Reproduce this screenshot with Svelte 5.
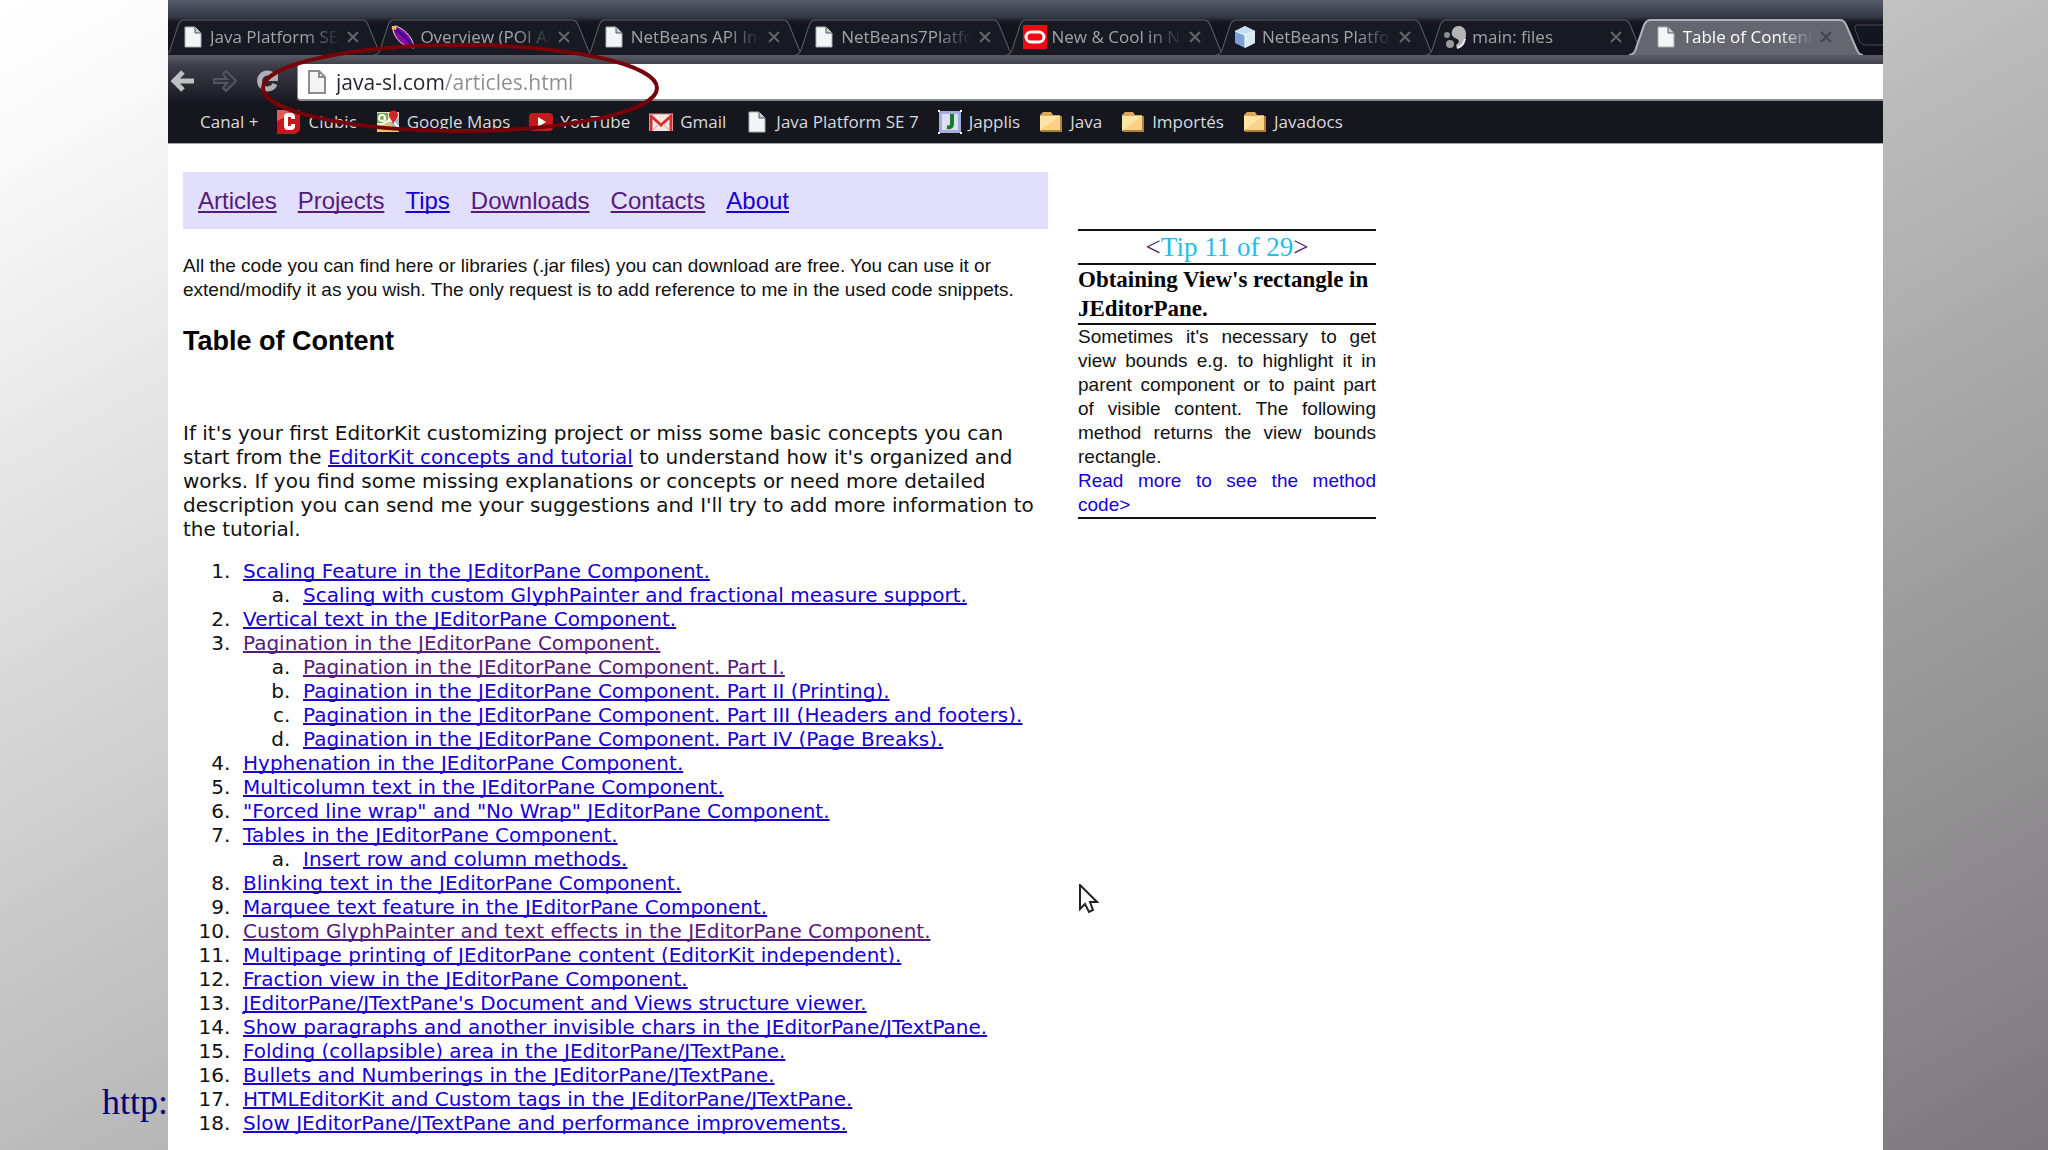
<script lang="ts">
	interface Tab {
		title: string;
		icon: string;
	}

	interface Entry {
		title: string;
		visited?: boolean;
		children?: Entry[];
	}

	const tabs: Tab[] = [
		{ title: 'Java Platform SE 7', icon: 'page' },
		{ title: 'Overview (POI API)', icon: 'feather' },
		{ title: 'NetBeans API Index', icon: 'page' },
		{ title: 'NetBeans7Platform', icon: 'page' },
		{ title: 'New & Cool in Net', icon: 'oracle' },
		{ title: 'NetBeans Platform', icon: 'cube' },
		{ title: 'main: files', icon: 'kenai' },
		{ title: 'Table of Contents', icon: 'page' }
	];

	const bookmarks: Tab[] = [
		{ title: 'Canal +', icon: '' },
		{ title: 'Clubic', icon: 'clubic' },
		{ title: 'Google Maps', icon: 'maps' },
		{ title: 'YouTube', icon: 'youtube' },
		{ title: 'Gmail', icon: 'gmail' },
		{ title: 'Java Platform SE 7', icon: 'page' },
		{ title: 'Japplis', icon: 'japplis' },
		{ title: 'Java', icon: 'folder' },
		{ title: 'Importés', icon: 'folder' },
		{ title: 'Javadocs', icon: 'folder' }
	];

	const menu: Entry[] = [
		{ title: 'Articles', visited: true },
		{ title: 'Projects', visited: true },
		{ title: 'Tips' },
		{ title: 'Downloads', visited: true },
		{ title: 'Contacts', visited: true },
		{ title: 'About' }
	];

	const articles: Entry[] = [
		{
			title: 'Scaling Feature in the JEditorPane Component.',
			children: [{ title: 'Scaling with custom GlyphPainter and fractional measure support.' }]
		},
		{ title: 'Vertical text in the JEditorPane Component.' },
		{
			title: 'Pagination in the JEditorPane Component.',
			visited: true,
			children: [
				{ title: 'Pagination in the JEditorPane Component. Part I.', visited: true },
				{ title: 'Pagination in the JEditorPane Component. Part II (Printing).' },
				{ title: 'Pagination in the JEditorPane Component. Part III (Headers and footers).' },
				{ title: 'Pagination in the JEditorPane Component. Part IV (Page Breaks).' }
			]
		},
		{ title: 'Hyphenation in the JEditorPane Component.' },
		{ title: 'Multicolumn text in the JEditorPane Component.' },
		{ title: '"Forced line wrap" and "No Wrap" JEditorPane Component.' },
		{
			title: 'Tables in the JEditorPane Component.',
			children: [{ title: 'Insert row and column methods.' }]
		},
		{ title: 'Blinking text in the JEditorPane Component.' },
		{ title: 'Marquee text feature in the JEditorPane Component.' },
		{ title: 'Custom GlyphPainter and text effects in the JEditorPane Component.', visited: true },
		{ title: 'Multipage printing of JEditorPane content (EditorKit independent).' },
		{ title: 'Fraction view in the JEditorPane Component.' },
		{ title: "JEditorPane/JTextPane's Document and Views structure viewer." },
		{ title: 'Show paragraphs and another invisible chars in the JEditorPane/JTextPane.' },
		{ title: 'Folding (collapsible) area in the JEditorPane/JTextPane.' },
		{ title: 'Bullets and Numberings in the JEditorPane/JTextPane.' },
		{ title: 'HTMLEditorKit and Custom tags in the JEditorPane/JTextPane.' },
		{ title: 'Slow JEditorPane/JTextPane and performance improvements.' }
	];

	let activeTab = $state(7);
	let address = $state('java-sl.com/articles.html');
</script>

{#snippet icon(name: string)}
	<svg class="icon" viewBox="0 0 24 24" aria-hidden="true">
		{#if name === 'page'}
			<path d="M4 2h10l6 6v14H4z" fill="#f4f5f6" stroke="#a9abb0" />
			<path d="M14 2v6h6" fill="#c9cbd0" stroke="#55585f" />
		{:else if name === 'feather'}
			<path d="M1 2L5 1C13 4 20 11 22 18L23 23C12 22 4 14 2 5z" fill="#8d0aa0" stroke="#f3d4ee" />
			<path d="M4 4C10 8 17 15 21 20" fill="none" stroke="#3c0a8c" stroke-width="3" />
			<path d="M1 1h5l-1 4-4-1z" fill="#f0b568" />
		{:else if name === 'oracle'}
			<path d="M0 0h24v24H0z" fill="#ee0a10" />
			<rect x="3" y="7" width="18" height="10" rx="5" fill="none" stroke="#fff" stroke-width="3" />
		{:else if name === 'cube'}
			<path d="M12 1L22 6V18L12 23L2 18V6z" fill="#7f9fd8" />
			<path d="M12 1L22 6L12 10L2 6z" fill="#c6e0f3" />
			<path d="M12 10L22 6V18L12 23z" fill="#d9eaee" />
			<path d="M12 10V22M2 6L12 10L22 6" fill="none" stroke="#f4fbff" />
		{:else if name === 'kenai'}
			<path d="M10 4C13-1 23 0 23 9C23 18 19 23 14 23L13 20C17 17 17 15 12 13C8 11 8 7 10 4z" fill="#b4b4b6" />
			<path d="M22 14C20 21 17 22 14 23" fill="none" stroke="#eee" stroke-width="2" />
			<circle cx="4" cy="10" r="3" fill="#8f8f92" />
			<circle cx="7" cy="19" r="4" fill="#9b9b9e" />
		{:else if name === 'clubic'}
			<path d="M0 0h23v20l-4 4H0z" fill="#c6171d" />
			<path d="M0 0h23L0 11z" fill="#df5c5b" />
			<path d="M16 9V7q0-2-2-2h-3q-2 0-2 2v9q0 2 2 2h3q2 0 2-2v-2" fill="none" stroke="#fff" stroke-width="4" />
		{:else if name === 'maps'}
			<path d="M1 2h22v20H1z" fill="#dfe1c8" />
			<path d="M1 3h11v10H1z" fill="#7aa653" />
			<path d="M1 16L12 11L23 22H1z" fill="#e3c36a" />
			<path d="M13 13L23 8V22z" fill="#a9b6bd" />
			<path d="M1 17L15 9L23 18" fill="none" stroke="#fff" stroke-width="2" />
			<circle cx="6" cy="8" r="3" fill="none" stroke="#fff" stroke-width="2" />
			<path d="M17 15C17 10 13 9 13 5a4 4 0 0 1 9 0C22 9 18 10 17 15z" fill="#d0252b" />
		{:else if name === 'youtube'}
			<rect x="0" y="3" width="24" height="18" rx="4" fill="#c51a1c" />
			<path d="M9 7L17 12L9 17z" fill="#fff" />
		{:else if name === 'gmail'}
			<path d="M0 4h24v17H0z" fill="#f2e9e6" />
			<path d="M2 21V6L12 15L22 6V21" fill="none" stroke="#d8302c" stroke-width="3" />
			<path d="M0 4h24" stroke="#e08a86" stroke-width="1" />
			<path d="M4 20L10 14M20 20L14 14" stroke="#d99b97" />
		{:else if name === 'japplis'}
			<path d="M1 1h22v22H1z" fill="#a9addb" />
			<path d="M4 4h16v16H4z" fill="#dbe0f4" />
			<path d="M14 4V14Q14 18 9 17" fill="none" stroke="#1c7a2d" stroke-width="4" />
			<path d="M0 0h2v2H0zM22 0h2v2h-2zM0 22h2v2H0zM22 22h2v2h-2z" fill="#fff" />
		{:else if name === 'folder'}
			<path d="M1 5L4 2h8l2 3h7v16H1z" fill="#dfa75a" />
			<path d="M1 6h20v15H1z" fill="#fbd283" />
			<path d="M1 6h20L3 19H1z" fill="#fde3a6" />
			<path d="M2 21h20V6" fill="none" stroke="#b07f3c" stroke-width="2" />
		{/if}
	</svg>
{/snippet}

{#snippet entries(items: Entry[])}
	{#each items as item}
		<li>
			<a href="#article" class:visited={item.visited}>{item.title}</a>
			{#if item.children}
				<ol class="sub">
					{@render entries(item.children)}
				</ol>
			{/if}
		</li>
	{/each}
{/snippet}

<div class="slide">
	<aside class="margin">
		<a class="slide-link" href="#source">http:</a>
	</aside>

	<div class="browser">
		<header class="chrome">
			<div class="tabs">
				{#each tabs as tab, i}
					<div class="tab" class:active={activeTab === i}>
						<svg class="shape" viewBox="0 0 218 37" preserveAspectRatio="none" aria-hidden="true">
							<path d="M0 36Q4 36 6 31L14 6Q16 1 20 1H196Q200 1 202 6L212 31Q214 36 218 36" />
						</svg>
						<button class="tab-button" onclick={() => (activeTab = i)}>
							{@render icon(tab.icon)}
							<span class="title">{tab.title}</span>
						</button>
						<button class="close" aria-label="Close tab">
							<svg viewBox="0 0 12 12" aria-hidden="true"><path d="M1 1L11 11M11 1L1 11" /></svg>
						</button>
					</div>
				{/each}
				<button class="new-tab" aria-label="New tab">
					<svg viewBox="0 0 40 24" aria-hidden="true">
						<path d="M40 2H6Q3 2 4 6L9 19Q11 22 15 22H40" />
					</svg>
				</button>
			</div>

			<div class="toolbar">
				<button class="tool" aria-label="Back">
					<svg viewBox="0 0 24 24" aria-hidden="true">
						<path d="M12 3L3 12L12 21M4 12H23" fill="none" stroke="#bfc0c3" stroke-width="5" />
					</svg>
				</button>
				<button class="tool" aria-label="Forward">
					<svg viewBox="0 0 24 24" aria-hidden="true">
						<path d="M1 10H14L10 5L13 2L23 12L13 22L10 19L14 14H1z" fill="#30313a" stroke="#555660" stroke-width="2" />
					</svg>
				</button>
				<button class="tool" aria-label="Reload">
					<svg viewBox="0 0 24 24" aria-hidden="true">
						<path d="M20 15A8 8 0 1 1 18 6" fill="none" stroke="#aeb0b4" stroke-width="5" />
						<path d="M23 1V12H12z" fill="#aeb0b4" />
					</svg>
				</button>
				<label class="address">
					<svg viewBox="0 0 18 24" aria-hidden="true">
						<path d="M1 1H11L17 7V23H1z" fill="#f4f4f4" stroke="#8c8c8c" stroke-width="2" />
						<path d="M11 1V7H17" fill="none" stroke="#8c8c8c" stroke-width="2" />
					</svg>
					<input type="text" aria-label="Address" bind:value={address} />
				</label>
			</div>

			<nav class="bookmarks">
				{#each bookmarks as bookmark}
					<a href="#bookmark">
						{#if bookmark.icon}
							{@render icon(bookmark.icon)}
						{/if}
						{bookmark.title}
					</a>
				{/each}
			</nav>

			<svg class="highlight" viewBox="0 0 400 92" aria-hidden="true">
				<ellipse cx="200" cy="46" rx="197" ry="43" />
			</svg>
		</header>

		<div class="page">
			<main>
				<nav class="menu">
					{#each menu as item}
						<a href="#menu" class:visited={item.visited}>{item.title}</a>
					{/each}
				</nav>
				<p class="intro">
					All the code you can find here or libraries (.jar files) you can download are free. You can use it or
					extend/modify it as you wish. The only request is to add reference to me in the used code snippets.
				</p>
				<h1>Table of Content</h1>
				<p class="lead">
					If it's your first EditorKit customizing project or miss some basic concepts you can start from the
					<a href="#tutorial">EditorKit concepts and tutorial</a> to understand how it's organized and works. If
					you find some missing explanations or concepts or need more detailed description you can send me your
					suggestions and I'll try to add more information to the tutorial.
				</p>
				<ol class="articles">
					{@render entries(articles)}
				</ol>
			</main>

			<aside class="tip">
				<div class="tip-nav">
					<a href="#previous">&lt;</a><span>Tip 11 of 29</span><a href="#next">&gt;</a>
				</div>
				<h2>Obtaining View's rectangle in JEditorPane.</h2>
				<p>
					Sometimes it's necessary to get view bounds e.g. to highlight it in parent component or to paint part of
					visible content. The following method returns the view bounds rectangle.
				</p>
				<p><a href="#more">Read more to see the method code&gt;</a></p>
			</aside>

			<svg class="cursor" viewBox="0 0 20 30" aria-hidden="true">
				<path d="M1 1V25L6 20L10 28L14 26L11 18H18z" />
			</svg>
		</div>
	</div>
</div>

<style>
	:global(body) {
		margin: 0;
	}

	.slide {
		display: grid;
		grid-template-columns: 168px minmax(0, 1fr) 165px;
		min-height: 100vh;
		background: linear-gradient(to bottom right, #ffffff, #f8f8f8 8%, #bcbcbc 50%, #7b797b);
		font-family: 'Liberation Sans', Arial, sans-serif;
		color: #111;
	}

	.margin {
		display: flex;
		align-items: flex-end;
		justify-content: flex-end;
		padding-bottom: 28px;
	}

	.slide-link {
		font: 36px/40px 'Liberation Serif', 'Times New Roman', serif;
		color: #00007c;
		text-decoration: none;
	}

	button {
		padding: 0;
		border: none;
		background: none;
		font: inherit;
		color: inherit;
	}

	.browser {
		background: #fff;
	}

	.chrome {
		position: relative;
		font-family: 'Open Sans', 'Noto Sans', sans-serif;
		font-size: 17px;
		background: #16161f;
		border-bottom: 1px solid #a5a6aa;
	}

	/* tab strip */
	.tabs {
		display: flex;
		height: 36px;
		padding-top: 19px;
		background: linear-gradient(#565b6a, #353844 17px, #14151e 22px, #10111a);
		overflow: hidden;
	}

	.tab {
		position: relative;
		display: flex;
		flex: 1;
		align-items: center;
		min-width: 0;
		padding: 0 19px 0 13px;
		box-sizing: border-box;
		color: #a3a4a8;
	}

	.shape {
		position: absolute;
		top: 0;
		left: -4px;
		width: calc(100% + 10px);
		height: 37px;
		fill: #181922;
		stroke: #5b5d66;
		stroke-width: 1;
	}

	.active .shape {
		left: -12px;
		width: calc(100% + 24px);
		fill: #656770;
		stroke: #b2b3b9;
		stroke-width: 2;
	}

	.tab-button {
		position: relative;
		display: flex;
		flex: 1;
		align-items: center;
		gap: 5px;
		min-width: 0;
	}

	.icon {
		flex: none;
		width: 24px;
		height: 24px;
	}

	.title {
		flex: 1;
		overflow: hidden;
		text-align: left;
		white-space: nowrap;
		line-height: 24px;
		mask-image: linear-gradient(to right, #000 72%, transparent 98%);
	}

	.active {
		color: #fff;
	}

	.close {
		position: relative;
		width: 16px;
		height: 12px;
		line-height: 0;
		text-align: right;
	}

	.close svg {
		width: 12px;
		height: 12px;
		stroke: #64666c;
		stroke-width: 2;
	}

	.active .close svg {
		stroke: #44464d;
	}

	.new-tab {
		width: 32px;
		overflow: hidden;
	}

	.new-tab svg {
		width: 40px;
		height: 24px;
		fill: #14151e;
		stroke: #4b4d56;
	}

	/* toolbar */
	.toolbar {
		display: flex;
		align-items: flex-end;
		gap: 18px;
		height: 46px;
		padding-left: 3px;
		background: linear-gradient(#5b5a64, #3a3b46 12px, #191a23);
	}

	.tool {
		width: 24px;
		height: 24px;
		margin-bottom: 8px;
		line-height: 0;
	}

	.tool svg {
		width: 24px;
		height: 24px;
	}

	.address {
		display: flex;
		flex: 1;
		align-items: center;
		gap: 10px;
		height: 35px;
		padding-left: 10px;
		background: #fff;
		border: solid #8b8c92;
		border-width: 0 0 2px 1px;
		border-radius: 4px 0 0 4px;
	}

	.address svg {
		width: 18px;
		height: 24px;
	}

	.address input {
		flex: 1;
		min-width: 0;
		padding: 0;
		border: none;
		outline: none;
		font: 21px/32px 'Open Sans', 'Noto Sans', sans-serif;
		color: transparent;
		caret-color: #222;
		background: linear-gradient(to right, #22232c 109px, #8c8d91 109px);
		background-clip: text;
	}

	.bookmarks {
		display: flex;
		align-items: center;
		gap: 19px;
		height: 42px;
		padding-left: 32px;
	}

	.bookmarks a {
		display: flex;
		align-items: center;
		gap: 7px;
		line-height: 24px;
		color: #d9dadd;
		text-decoration: none;
		white-space: nowrap;
	}

	.highlight {
		position: absolute;
		top: 42px;
		left: 92px;
		width: 400px;
		height: 92px;
		fill: none;
		stroke: #780008;
		stroke-width: 4;
		pointer-events: none;
	}

	/* page */
	.page {
		position: relative;
		display: flex;
		align-items: flex-start;
		gap: 30px;
		padding: 28px 15px 12px;
	}

	main {
		width: 865px;
	}

	.page a {
		color: #1600d4;
		text-decoration-skip-ink: none;
	}

	.page a.visited {
		color: #551a7b;
	}

	.menu {
		display: flex;
		gap: 21px;
		padding: 14px 15px;
		font-size: 24px;
		line-height: 29px;
		background: #e2dffc;
	}

	.intro {
		margin: 25px 0 24px;
		font-size: 19px;
		line-height: 24px;
	}

	h1 {
		margin: 0 0 65px;
		font-size: 27px;
		line-height: 30px;
		color: #000;
	}

	.lead,
	.articles {
		font-family: 'DejaVu Sans', Verdana, sans-serif;
		font-size: 20px;
		line-height: 24px;
	}

	.lead {
		margin: 0;
		padding-right: 5px;
	}

	.articles {
		margin: 18px 0 0;
		padding-left: 60px;
	}

	.sub {
		padding-left: 60px;
		list-style: lower-alpha;
	}

	.articles li::marker {
		content: counter(list-item) '.\00a0\00a0';
	}

	.sub li::marker {
		content: counter(list-item, lower-alpha) '.\00a0\00a0';
	}

	.tip {
		width: 298px;
		margin-top: 57px;
		border: solid #111;
		border-width: 2px 0;
		font-size: 19px;
		line-height: 24px;
		text-align: justify;
	}

	.tip-nav {
		font: 27px/32px 'Liberation Serif', 'Times New Roman', serif;
		text-align: center;
		color: #22bde8;
	}

	.tip-nav a {
		color: #551a7b;
	}

	.page .tip a {
		text-decoration: none;
	}

	.tip h2 {
		margin: 0;
		border: solid #111;
		border-width: 2px 0;
		font: bold 23px/29px 'Liberation Serif', 'Times New Roman', serif;
		text-align: left;
		color: #000;
	}

	.tip p {
		margin: 0;
	}

	.cursor {
		position: absolute;
		top: 740px;
		left: 911px;
		width: 20px;
		height: 30px;
		fill: #fff;
		stroke: #222;
		stroke-width: 2;
	}
</style>
